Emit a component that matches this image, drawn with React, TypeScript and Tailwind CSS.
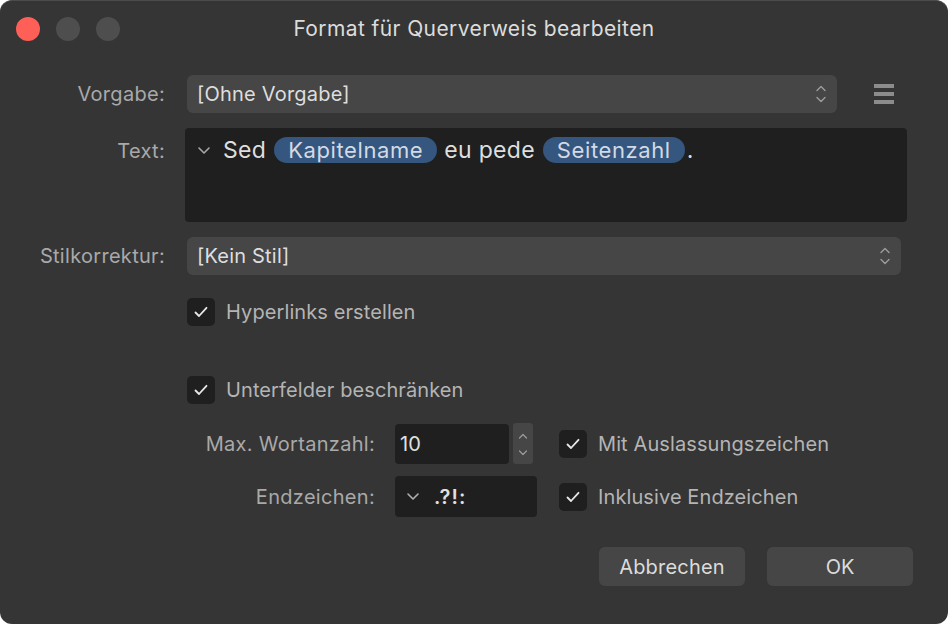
import React from 'react'

function UpDown({ className = '' }: { className?: string }) {
  return (
    <svg width="12" height="22" viewBox="0 0 12 22" className={className} fill="none" stroke="currentColor" strokeWidth="1.4" strokeLinecap="round" strokeLinejoin="round">
      <path d="M2 7.5 6 3.5 10 7.5" />
      <path d="M2 14.5 6 18.5 10 14.5" />
    </svg>
  )
}

function Chevron() {
  return (
    <svg width="14" height="9" viewBox="0 0 14 9" fill="none" stroke="currentColor" strokeWidth="1.6" strokeLinecap="round" strokeLinejoin="round">
      <path d="M2 2 7 7 12 2" />
    </svg>
  )
}

function Check({ label }: { label: string }) {
  return (
    <div className="flex items-center gap-[11px] h-[28px]">
      <div className="w-[28px] h-[28px] rounded-[5px] bg-[#1f1f1f] flex items-center justify-center text-[#e8e8e8]">
        <svg width="14" height="12" viewBox="0 0 14 12" fill="none" stroke="currentColor" strokeWidth="1.8" strokeLinecap="round" strokeLinejoin="round">
          <path d="M1.5 6.5 5 10 12.5 1.8" />
        </svg>
      </div>
      <span className="text-[20px] leading-[28px] tracking-[0.1px] text-[#b4b4b4]">{label}</span>
    </div>
  )
}

function Token({ children }: { children: React.ReactNode }) {
  return (
    <span className="inline-flex items-center h-[26px] px-[14px] rounded-full bg-[#35567f] text-[#d2dae4] text-[22px] tracking-[0.6px]">
      {children}
    </span>
  )
}

export default function App() {
  return (
    <div className="w-[948px] h-[624px] bg-white" style={{ fontFamily: 'Inter, "Noto Sans", sans-serif' }}>
      <div className="w-full h-full rounded-[12px] bg-[#353535] border-t border-[#4b4b4b] flex flex-col">
        {/* title bar */}
        <div className="h-[55px] grid grid-cols-[1fr_auto_1fr] items-center">
          <div className="flex items-center gap-[16px] pl-[16px]">
            <div className="w-[24px] h-[24px] rounded-full bg-[#fe5f57]" />
            <div className="w-[24px] h-[24px] rounded-full bg-[#4e4e4e]" />
            <div className="w-[24px] h-[24px] rounded-full bg-[#4e4e4e]" />
          </div>
          <div className="text-[21px] text-[#dcdcdc] tracking-[0.4px]">Format für Querverweis bearbeiten</div>
          <div />
        </div>

        {/* Vorgabe */}
        <div className="mt-[19px] flex items-center">
          <div className="w-[165px] text-right text-[20px] tracking-[0.3px] text-[#a9a9a9]">Vorgabe:</div>
          <div className="ml-[22px] w-[650px] h-[38px] rounded-[6px] bg-[#464646] flex items-center justify-between pl-[10px] pr-[10px]">
            <span className="text-[20px] tracking-[0.2px] text-[#dedede]">[Ohne Vorgabe]</span>
            <UpDown className="text-[#9c9c9c]" />
          </div>
          <div className="ml-[37px] w-[20px] flex flex-col gap-[4px]">
            <div className="h-[4px] bg-[#8c8c8c]" />
            <div className="h-[4px] bg-[#8c8c8c]" />
            <div className="h-[4px] bg-[#8c8c8c]" />
          </div>
        </div>

        {/* Text */}
        <div className="mt-[15px] flex items-start">
          <div className="w-[165px] text-right text-[20px] tracking-[0.3px] text-[#a9a9a9] mt-[8px]">Text:</div>
          <div className="ml-[20px] w-[722px] h-[94px] rounded-[4px] bg-[#1f1f1f] pt-[9px] pl-[12px]">
            <div className="flex items-center h-[26px] text-[23px] tracking-[0.3px] text-[#dedede]">
              <span className="text-[#a8a8a8] mr-[12px]"><Chevron /></span>
              <span className="mr-[8px]">Sed</span>
              <Token>Kapitelname</Token>
              <span className="ml-[7px] mr-[8px]">eu pede</span>
              <Token>Seitenzahl</Token>
              <span className="ml-[2px]">.</span>
            </div>
          </div>
        </div>

        {/* Stilkorrektur */}
        <div className="mt-[15px] flex items-center">
          <div className="w-[165px] text-right text-[20px] tracking-[0.3px] text-[#a9a9a9]">Stilkorrektur:</div>
          <div className="ml-[22px] w-[714px] h-[38px] rounded-[6px] bg-[#464646] flex items-center justify-between pl-[10px] pr-[10px]">
            <span className="text-[20px] tracking-[0.2px] text-[#dedede]">[Kein Stil]</span>
            <UpDown className="text-[#9c9c9c]" />
          </div>
        </div>

        <div className="mt-[23px] pl-[187px]">
          <Check label="Hyperlinks erstellen" />
        </div>
        <div className="mt-[50px] pl-[187px]">
          <Check label="Unterfelder beschränken" />
        </div>

        {/* Max. Wortanzahl */}
        <div className="mt-[19px] flex items-center h-[41px]">
          <div className="w-[375px] text-right text-[20px] tracking-[0.3px] text-[#a9a9a9]">Max. Wortanzahl:</div>
          <div className="ml-[20px] w-[114px] h-[40px] rounded-[4px] bg-[#1f1f1f] flex items-center pl-[5px] text-[20px] text-[#e0e0e0]">10</div>
          <div className="ml-[4px] w-[20px] h-[41px] rounded-[3px] bg-[#464646] flex items-center justify-center">
            <svg width="10" height="30" viewBox="0 0 10 30" fill="none" stroke="#9c9c9c" strokeWidth="1.2" strokeLinecap="round" strokeLinejoin="round">
              <path d="M1.5 9 5 5.5 8.5 9" />
              <path d="M1.5 22 5 25.5 8.5 22" />
            </svg>
          </div>
          <div className="ml-[26px]">
            <Check label="Mit Auslassungszeichen" />
          </div>
        </div>

        {/* Endzeichen */}
        <div className="mt-[12px] flex items-center h-[41px]">
          <div className="w-[375px] text-right text-[20px] tracking-[0.3px] text-[#a9a9a9]">Endzeichen:</div>
          <div className="ml-[20px] w-[142px] h-[41px] rounded-[4px] bg-[#1f1f1f] flex items-center pl-[11px] text-[20px] text-[#e0e0e0]">
            <span className="text-[#b0b0b0] mr-[14px]"><Chevron /></span>
            <span className="font-semibold tracking-[1px]">.?!:</span>
          </div>
          <div className="ml-[22px]">
            <Check label="Inklusive Endzeichen" />
          </div>
        </div>

        {/* buttons */}
        <div className="mt-[30px] flex justify-end gap-[22px] pr-[35px]">
          <button className="w-[146px] h-[39px] rounded-[6px] bg-[#464646] text-[20px] tracking-[0.2px] text-[#dcdcdc]">Abbrechen</button>
          <button className="w-[146px] h-[39px] rounded-[6px] bg-[#464646] text-[20px] text-[#dcdcdc]">OK</button>
        </div>
      </div>
    </div>
  )
}
